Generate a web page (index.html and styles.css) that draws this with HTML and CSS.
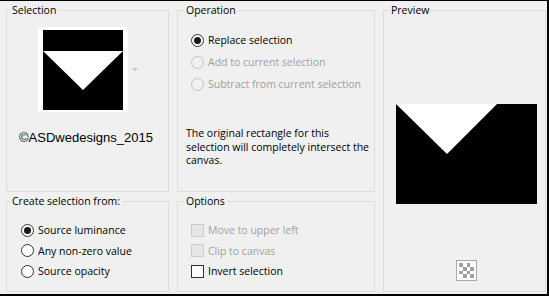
FILE: index.html
```html
<!DOCTYPE html>
<html lang="en">
<head>
  <meta charset="UTF-8" />
  <title>Selection from mask</title>
  <link rel="stylesheet" href="styles.css">
</head>
<body>
  <div class="dialog">
    <fieldset class="group selection">
      <legend>Selection</legend>
      <div class="thumb-row">
        <div class="thumb">
          <svg width="80" height="80" viewBox="0 0 80 80">
            <rect width="80" height="80" fill="#000"/>
            <polygon points="0,21 80,21 40,60" fill="#fff"/>
          </svg>
        </div>
        <span class="drop-arrow"></span>
      </div>
      <p class="credit">©ASDwedesigns_2015</p>
    </fieldset>

    <fieldset class="group operation">
      <legend>Operation</legend>
      <div class="choices">
        <label class="opt"><span class="radio checked"></span>Replace selection</label>
        <label class="opt off"><span class="radio"></span>Add to current selection</label>
        <label class="opt off"><span class="radio"></span>Subtract from current selection</label>
      </div>
      <p class="note">The original rectangle for this<br>selection will completely intersect the<br>canvas.</p>
    </fieldset>

    <fieldset class="group preview">
      <legend>Preview</legend>
      <svg class="preview-img" width="141" height="100" viewBox="0 0 141 100">
        <rect width="141" height="100" fill="#000"/>
        <polygon points="0,0 101,0 51,50" fill="#fff"/>
      </svg>
      <div class="checker">
        <svg width="15" height="15" viewBox="0 0 4 4" shape-rendering="crispEdges">
          <rect width="4" height="4" fill="#fff"/>
          <rect x="0" y="0" width="1" height="1" fill="#a0a0a0"/>
          <rect x="2" y="0" width="1" height="1" fill="#a0a0a0"/>
          <rect x="1" y="1" width="1" height="1" fill="#a0a0a0"/>
          <rect x="3" y="1" width="1" height="1" fill="#a0a0a0"/>
          <rect x="0" y="2" width="1" height="1" fill="#a0a0a0"/>
          <rect x="2" y="2" width="1" height="1" fill="#a0a0a0"/>
          <rect x="1" y="3" width="1" height="1" fill="#a0a0a0"/>
          <rect x="3" y="3" width="1" height="1" fill="#a0a0a0"/>
        </svg>
      </div>
    </fieldset>

    <fieldset class="group create">
      <legend>Create selection from:</legend>
      <div class="choices tight">
        <label class="opt"><span class="radio checked"></span>Source luminance</label>
        <label class="opt"><span class="radio"></span>Any non-zero value</label>
        <label class="opt"><span class="radio"></span>Source opacity</label>
      </div>
    </fieldset>

    <fieldset class="group options">
      <legend>Options</legend>
      <div class="choices tight">
        <label class="opt off"><span class="check"></span>Move to upper left</label>
        <label class="opt off"><span class="check"></span>Clip to canvas</label>
        <label class="opt"><span class="check"></span>Invert selection</label>
      </div>
    </fieldset>
  </div>
</body>
</html>
```

FILE: styles.css
```css
* { box-sizing: border-box; }
body {
  margin: 0; background: #f0f0f0; color: #000;
  font-family: "Open Sans", "Noto Sans", sans-serif; font-size: 10.5px;
}

.dialog {
  width: 549px; height: 296px;
  border-top: 1px solid #000; border-right: 2px solid #000; border-bottom: 2px solid #000;
  padding: 1px 1px 2px 6px;
  display: grid;
  grid-template-columns: 163px 198px 163px;
  grid-template-rows: 190px 99px;
  column-gap: 8px; row-gap: 1px;
}

/* group boxes */
.group { margin: 0; padding: 0; border: 1px solid #dcdcdc; min-width: 0; }
.group legend { padding: 0 2px; margin-left: 3px; line-height: 16px; }
.operation legend, .options legend { margin-left: 6px; }
.preview legend { margin-left: 5px; }
.selection { grid-column: 1; grid-row: 1; }
.operation { grid-column: 2; grid-row: 1; }
.preview { grid-column: 3; grid-row: 1 / span 2; }
.create { grid-column: 1; grid-row: 2; }
.options { grid-column: 2; grid-row: 2; }

/* selection thumbnail */
.thumb-row { display: flex; align-items: center; margin: 9px 0 0 31px; }
.thumb { background: #fff; padding: 3px 5px 2px; line-height: 0; }
.drop-arrow {
  width: 0; height: 0; margin-left: 4px;
  border-left: 3px solid transparent; border-right: 3px solid transparent;
  border-top: 3px solid #c4c4c4;
}
.credit { margin: 18px 0 0 12px; font: 13px/16px "Liberation Sans", Arial, sans-serif; }

/* radio / check rows */
.choices { padding: 11px 0 0 13px; }
.create .choices { padding-left: 14px; }
.opt { display: flex; align-items: center; gap: 4px; height: 22px; white-space: nowrap; }
.tight .opt { height: 20.5px; }
.opt.off { color: #a0a0a0; }

.radio {
  width: 13px; height: 13px; border: 1px solid #333; border-radius: 50%;
  background: #fff; display: flex; align-items: center; justify-content: center; flex: none;
}
.radio.checked::after { content: ""; width: 7px; height: 7px; border-radius: 50%; background: #1a1a1a; }
.off .radio { border-color: #c2c2c2; background: #f0f0f0; }

.check { width: 13px; height: 13px; border: 1px solid #333; background: #fff; flex: none; }
.off .check { border-color: #cccccc; background: #e6e6e6; }

.note { margin: 32px 0 0 8px; line-height: 13.5px; white-space: nowrap; }

/* preview */
.preview-img { display: block; margin: 86px 0 0 12px; }
.checker {
  width: 21px; height: 21px; margin: 56px 0 0 72px;
  border: 1px solid #a8a8a8; background: #fff;
  display: flex; align-items: center; justify-content: center;
}
.checker svg { display: block; }
```
